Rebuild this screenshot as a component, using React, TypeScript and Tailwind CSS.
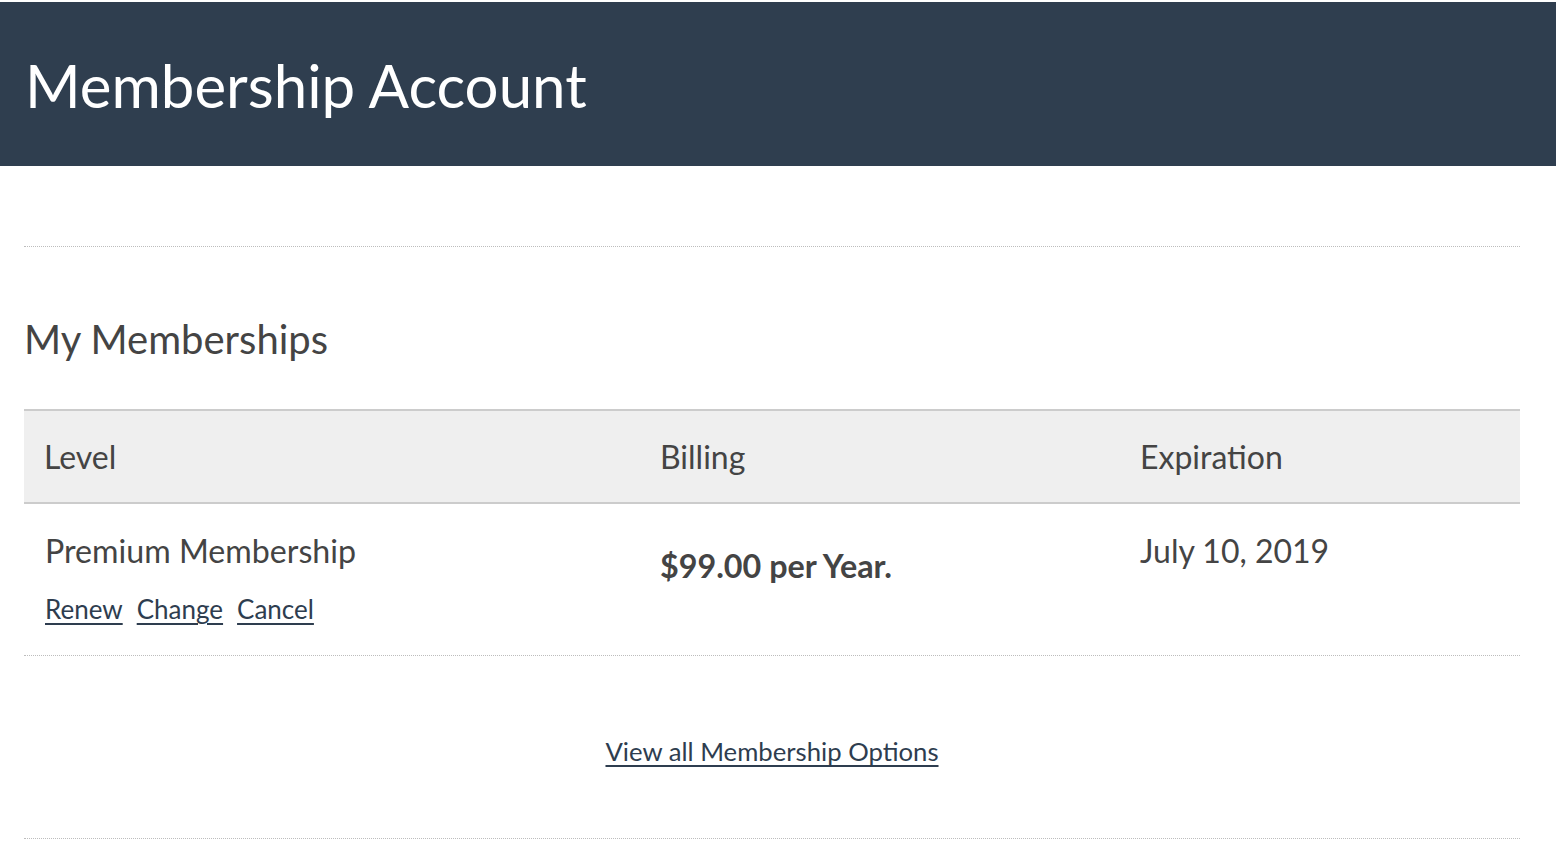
import { FC } from "react";

type Membership = {
  level: string;
  billing: string;
  expiration: string;
};

const memberships: Membership[] = [
  {
    level: "Premium Membership",
    billing: "$99.00 per Year.",
    expiration: "July 10, 2019",
  },
];

const App: FC = () => {
  return (
    <div className="min-h-screen bg-white pt-[2px] font-['Lato',sans-serif] text-[#444]">
      <header className="bg-[#2f3e4f] h-[164px] flex items-center px-[25px]">
        <h1 className="text-[60px] leading-none text-white pt-[2px]">
          Membership Account
        </h1>
      </header>

      <main className="mx-[24px] w-[1496px]">
        <div className="h-[80px]" />
        <hr className="border-0 border-t border-dotted border-[#bdbdbd]" />

        <h2 className="text-[40px] leading-none pt-[72px] pb-[50px]">
          My Memberships
        </h2>

        <div className="border-t-2 border-[#cccccc]">
          <div className="grid grid-cols-[616px_480px_400px] bg-[#efefef] border-b-2 border-[#cccccc] h-[93px] items-center text-[32px]">
            <div className="pl-[20px]">Level</div>
            <div className="pl-[20px]">Billing</div>
            <div className="pl-[20px]">Expiration</div>
          </div>

          {memberships.map((m, i) => (
            <div
              key={i}
              className="grid grid-cols-[616px_480px_400px] h-[152px] border-b border-dotted border-[#bdbdbd]"
            >
              <div className="pl-[21px] pt-[27px]">
                <p className="text-[32.2px] leading-[40px]">{m.level}</p>
                <div className="flex gap-[14px] mt-[21px] text-[26px] leading-[34px] text-[#2e3d4f]">
                  <a href="#" className="underline underline-offset-[4px]">
                    Renew
                  </a>
                  <a href="#" className="underline underline-offset-[4px]">
                    Change
                  </a>
                  <a href="#" className="underline underline-offset-[4px]">
                    Cancel
                  </a>
                </div>
              </div>
              <div className="pl-[20px] pt-[42px]">
                <p className="text-[32.3px] leading-[40px] font-bold">{m.billing}</p>
              </div>
              <div className="pl-[20px] pt-[27px]">
                <p className="text-[32px] leading-[40px]">{m.expiration}</p>
              </div>
            </div>
          ))}
        </div>

        <div className="flex justify-center pt-[78px] pb-[70px]">
          <a
            href="#"
            className="text-[25.7px] leading-[34px] text-[#2e3d4f] underline underline-offset-[4px]"
          >
            View all Membership Options
          </a>
        </div>
        <hr className="border-0 border-t border-dotted border-[#bdbdbd]" />
      </main>
    </div>
  );
};

export default App;
